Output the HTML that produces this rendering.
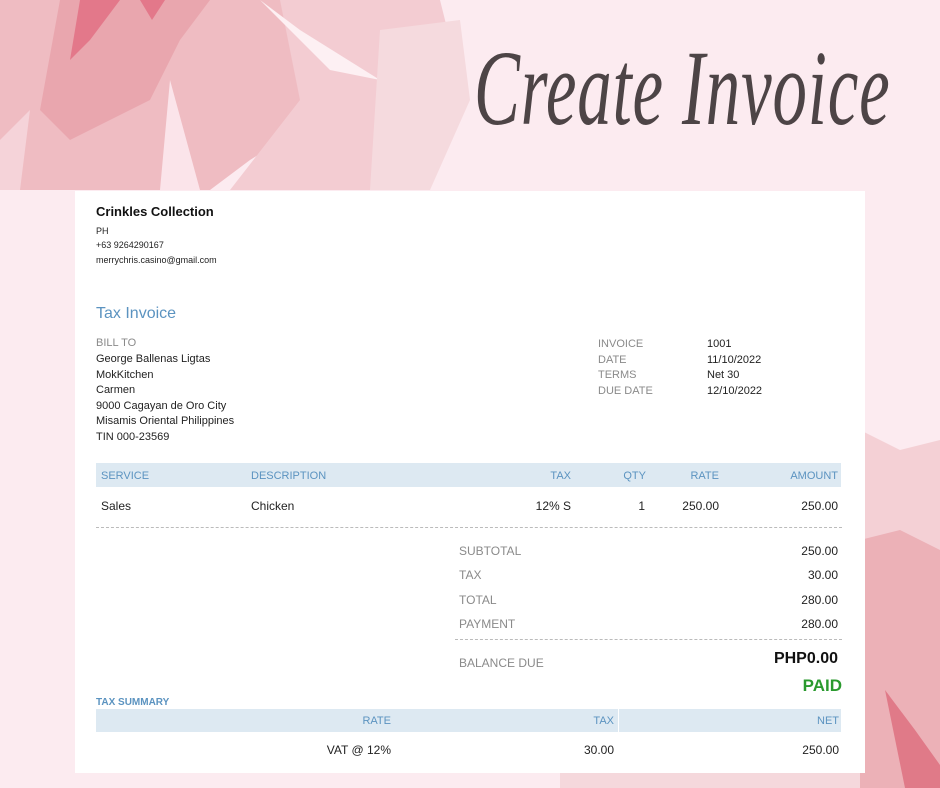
<!DOCTYPE html>
<html><head><meta charset="utf-8"><style>
*{margin:0;padding:0;box-sizing:border-box}
body{width:940px;height:788px;position:relative;overflow:hidden;background:#fcebf0;font-family:"Liberation Sans",sans-serif}
.bg{position:absolute;left:0;top:0}
.title{position:absolute;left:474px;top:28px;font-family:"Liberation Serif",serif;font-style:italic;font-size:82px;color:#4d4446;letter-spacing:1px;font-weight:normal;white-space:nowrap;transform:scale(0.84,1.3);transform-origin:top left}
.card{position:absolute;left:75px;top:191px;width:790px;height:582px;background:#fff}
.a{position:absolute;white-space:nowrap}
.sm{font-size:9px;color:#222}
.lbl{font-size:11px;color:#8a8a8a}
.t{font-size:11px;color:#222}
.hd{position:absolute;left:21px;width:745px;background:#dde9f2}
.blue{color:#5b93c0}
.r{text-align:right}
.dash{position:absolute;border-top:1px dashed #bbb}
</style></head><body>
<svg class="bg" width="940" height="788">
<path d="M0 0H300L340 60 330 110 250 160 210 190H0Z" fill="#efbcc2"/>
<path d="M60 0H210L180 40 150 100 70 140 40 110Z" fill="#e9a6ae"/>
<path d="M80 0H120L90 40 70 60Z" fill="#e3788a"/>
<path d="M140 0H165L152 20Z" fill="#e3788a"/>
<path d="M0 140L30 110 20 190H0Z" fill="#f5d3d9"/>
<path d="M170 80L200 190H160Z" fill="#fbe4ea"/>
<path d="M280 0H440L460 80 420 110 380 190H230L300 100Z" fill="#f3ccd2"/>
<path d="M260 0L300 40 330 70 380 80 300 30Z" fill="#fdf0f3"/>
<path d="M380 30L460 20 470 100 430 190H370Z" fill="#f5dade"/>
<path d="M860 430L900 450 940 440V788H860Z" fill="#f4d0d5"/>
<path d="M860 540L900 530 940 550V788H860Z" fill="#ecb1b7"/>
<path d="M885 690L915 730 940 765V788H905Z" fill="#e07a88"/>
<path d="M560 773H860V788H560Z" fill="#f5d8dc"/>
</svg>
<div class="title">Create Invoice</div>
<div class="card">
<div class="a" style="left:21px;top:13px;font-size:13px;font-weight:bold;color:#111">Crinkles Collection</div>
<div class="a sm" style="left:21px;top:35px">PH</div>
<div class="a sm" style="left:21px;top:49px">+63 9264290167</div>
<div class="a sm" style="left:21px;top:64px">merrychris.casino@gmail.com</div>
<div class="a" style="left:21px;top:114px;font-size:16px;color:#5b93c0">Tax Invoice</div>
<div class="a lbl" style="left:21px;top:146px">BILL TO</div>
<div class="a t" style="left:21px;top:161px;line-height:15.6px">George Ballenas Ligtas<br>MokKitchen<br>Carmen<br>9000 Cagayan de Oro City<br>Misamis Oriental Philippines<br>TIN 000-23569</div>
<div class="a lbl" style="left:523px;top:146px;line-height:15.6px">INVOICE<br>DATE<br>TERMS<br>DUE DATE</div>
<div class="a t" style="left:632px;top:146px;line-height:15.6px">1001<br>11/10/2022<br>Net 30<br>12/10/2022</div>
<div class="hd" style="top:272px;height:24px"></div>
<div class="a blue" style="left:26px;top:279px;font-size:11px">SERVICE</div>
<div class="a blue" style="left:176px;top:279px;font-size:11px">DESCRIPTION</div>
<div class="a blue r" style="right:294px;top:279px;font-size:11px">TAX</div>
<div class="a blue r" style="right:219px;top:279px;font-size:11px">QTY</div>
<div class="a blue r" style="right:146px;top:279px;font-size:11px">RATE</div>
<div class="a blue r" style="right:27px;top:279px;font-size:11px">AMOUNT</div>
<div class="a" style="left:26px;top:308px;font-size:12px;color:#222">Sales</div>
<div class="a" style="left:176px;top:308px;font-size:12px;color:#222">Chicken</div>
<div class="a" style="right:294px;top:308px;font-size:12px;color:#222">12% S</div>
<div class="a" style="right:220px;top:308px;font-size:12px;color:#222">1</div>
<div class="a" style="right:146px;top:308px;font-size:12px;color:#222">250.00</div>
<div class="a" style="right:27px;top:308px;font-size:12px;color:#222">250.00</div>
<div class="dash" style="left:21px;width:746px;top:336px"></div>
<div class="a" style="left:384px;top:348px;font-size:12px;color:#8a8a8a;line-height:24.3px">SUBTOTAL<br>TAX<br>TOTAL<br>PAYMENT</div>
<div class="a r" style="right:27px;top:348px;font-size:12px;color:#222;line-height:24.3px">250.00<br>30.00<br>280.00<br>280.00</div>
<div class="dash" style="left:380px;width:387px;top:448px"></div>
<div class="a" style="left:384px;top:465px;font-size:12px;color:#8a8a8a">BALANCE DUE</div>
<div class="a" style="right:27px;top:459px;font-size:16px;font-weight:bold;color:#111">PHP0.00</div>
<div class="a" style="right:23px;top:485px;font-size:17px;font-weight:bold;color:#2a9a2e">PAID</div>
<div class="a blue" style="left:21px;top:506px;font-size:10px;font-weight:bold">TAX SUMMARY</div>
<div class="hd" style="top:518px;height:23px"></div>
<div style="position:absolute;left:543px;top:518px;width:1px;height:23px;background:#fff"></div>
<div class="a blue" style="right:474px;top:524px;font-size:11px">RATE</div>
<div class="a blue" style="right:251px;top:524px;font-size:11px">TAX</div>
<div class="a blue" style="right:26px;top:524px;font-size:11px">NET</div>
<div class="a" style="right:474px;top:552px;font-size:12px;color:#222">VAT @ 12%</div>
<div class="a" style="right:251px;top:552px;font-size:12px;color:#222">30.00</div>
<div class="a" style="right:26px;top:552px;font-size:12px;color:#222">250.00</div>
</div>
</body></html>
